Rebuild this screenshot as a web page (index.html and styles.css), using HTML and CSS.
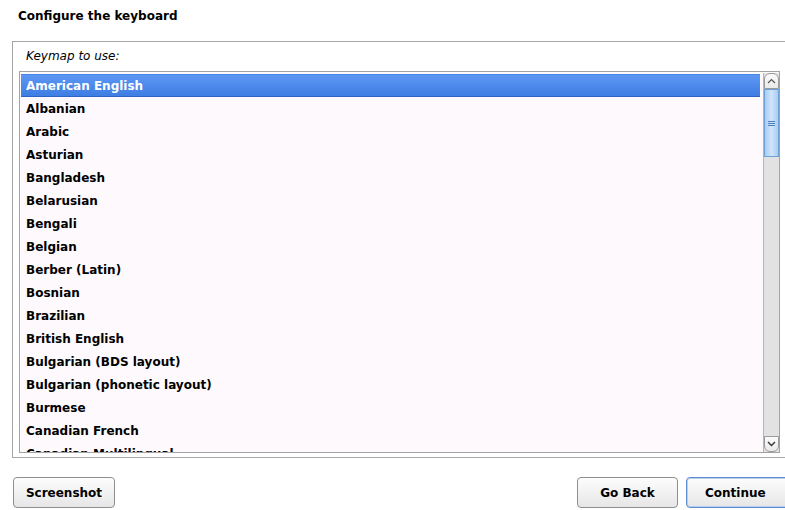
FILE: index.html
```html
<!DOCTYPE html>
<html>
<head>
<meta charset="utf-8">
<link rel="stylesheet" href="styles.css">
</head>
<body>
<div class="page">
  <div class="title">Configure the keyboard</div>
  <div class="frame">
    <div class="label">Keymap to use:</div>
    <div class="listbox">
      <div class="items">
        <div class="item selected">American English</div>
        <div class="item">Albanian</div>
        <div class="item">Arabic</div>
        <div class="item">Asturian</div>
        <div class="item">Bangladesh</div>
        <div class="item">Belarusian</div>
        <div class="item">Bengali</div>
        <div class="item">Belgian</div>
        <div class="item">Berber (Latin)</div>
        <div class="item">Bosnian</div>
        <div class="item">Brazilian</div>
        <div class="item">British English</div>
        <div class="item">Bulgarian (BDS layout)</div>
        <div class="item">Bulgarian (phonetic layout)</div>
        <div class="item">Burmese</div>
        <div class="item">Canadian French</div>
        <div class="item">Canadian Multilingual</div>
        <div class="item">Catalan</div>
      </div>
      <div class="scrollbar">
        <div class="sb-btn sb-up">
          <svg width="9" height="6" viewBox="0 0 9 6"><path d="M1 5 L4.5 1.5 L8 5" fill="none" stroke="#555" stroke-width="1.2"/></svg>
        </div>
        <div class="sb-thumb">
          <svg width="7" height="7" viewBox="0 0 7 7"><path d="M0 1.5H7M0 3.5H7M0 5.5H7" stroke="#4f7fb8" stroke-width="1"/></svg>
        </div>
        <div class="sb-track"></div>
        <div class="sb-btn sb-down">
          <svg width="9" height="6" viewBox="0 0 9 6"><path d="M1 1 L4.5 4.5 L8 1" fill="none" stroke="#333" stroke-width="1.4"/></svg>
        </div>
      </div>
    </div>
  </div>
  <div class="buttons">
    <button class="btn btn-shot">Screenshot</button>
    <div class="spacer"></div>
    <button class="btn btn-back">Go Back</button>
    <button class="btn btn-continue">Continue</button>
  </div>
</div>
</body>
</html>
```

FILE: styles.css
```css
html, body {
  margin: 0;
  padding: 0;
  background: #ffffff;
  overflow: hidden;
}
body {
  width: 785px;
  height: 510px;
  font-family: "DejaVu Sans", sans-serif;
  font-size: 12px;
  color: #000;
}
.page {
  display: flex;
  flex-direction: column;
  width: 785px;
  height: 510px;
  overflow: hidden;
}
.title {
  font-weight: bold;
  padding: 8px 0 0 18px;
  line-height: 16px;
  height: 16px;
}
.frame {
  margin: 17px -12px 0 12px;
  border: 1px solid #a7a7a7;
  padding: 0 0 0 6px;
  display: flex;
  flex-direction: column;
  box-sizing: border-box;
  height: 417px;
}
.label {
  font-style: italic;
  line-height: 16px;
  padding: 6px 0 0 7px;
  height: 16px;
  margin-bottom: 7px;
}
.listbox {
  width: 761px;
  height: 382px;
  box-sizing: border-box;
  border: 1px solid #a3a3a3;
  background: #fdf9fd;
  display: flex;
  overflow: hidden;
}
.items {
  flex: 1;
  padding: 2px 1px 0 1px;
  overflow: hidden;
}
.item {
  height: 23px;
  line-height: 25px;
  padding-left: 5px;
  font-weight: bold;
  white-space: nowrap;
  overflow: hidden;
}
.item.selected {
  background: linear-gradient(#5e98f4, #3d7ce2);
  color: #fff;
  box-shadow: inset 0 -1px 0 #2d62c6, inset 0 1px 0 #4a86e8;
}
.scrollbar {
  width: 15px;
  margin: 1px 0 0 2px;
  display: flex;
  flex-direction: column;
  background: #e3e3e3;
  border-left: 1px solid #b5b5b5;
}
.sb-btn {
  height: 16px;
  display: flex;
  align-items: center;
  justify-content: center;
  background: linear-gradient(#fbfbfb, #e9e9e9);
  border: 1px solid #9a9a9a;
  box-sizing: border-box;
}
.sb-up {
  border-radius: 6px 6px 0 0;
}
.sb-down {
  border-radius: 0 0 6px 6px;
}
.sb-thumb {
  height: 68px;
  background: linear-gradient(to right, #a9cdf3, #cfe4fa 50%, #a9cdf3);
  border: 1px solid #6e9fd6;
  box-sizing: border-box;
  display: flex;
  align-items: center;
  justify-content: center;
}
.sb-track {
  flex: 1;
  background: #e2e2e2;
}
.buttons {
  display: flex;
  margin-top: 19px;
  padding-left: 13px;
  margin-right: -6px;
}
.spacer {
  flex: 1;
}
.btn {
  height: 31px;
  box-sizing: border-box;
  font-family: "DejaVu Sans", sans-serif;
  font-size: 12px;
  font-weight: bold;
  color: #000;
  background: linear-gradient(#fdfdfd, #e6e6e6);
  border: 1px solid #8e8e8e;
  border-radius: 4px;
  padding: 0;
}
.btn-shot {
  width: 102px;
}
.btn-back {
  width: 101px;
}
.btn-continue {
  width: 105px;
  margin-left: 8px;
  border-color: #5d8ccf;
  box-shadow: inset 0 0 0 1px #b8cff0;
  text-align: left;
  padding-left: 18px;
}
```
